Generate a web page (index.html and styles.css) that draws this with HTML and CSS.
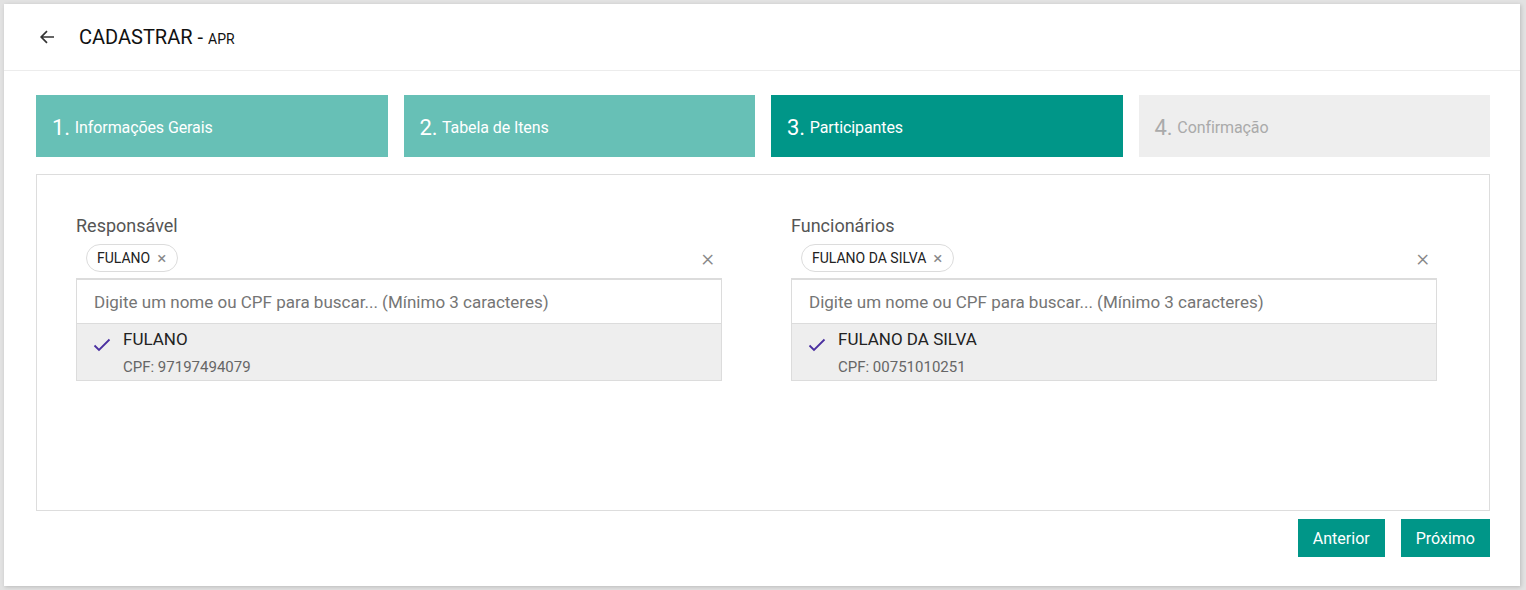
FILE: index.html
```html
<!DOCTYPE html>
<html lang="pt">
<head>
<meta charset="utf-8">
<title>Cadastrar APR</title>
<link rel="stylesheet" href="styles.css">
</head>
<body>
<div class="card">
  <header class="header">
    <svg class="back" width="16" height="16" viewBox="0 0 16 16"><path d="M15 8H2.5M8 2.2L2.2 8 8 13.8" fill="none" stroke="#333" stroke-width="1.7"/></svg>
    <h1 class="title">CADASTRAR <span class="sub">- <small>APR</small></span></h1>
  </header>
  <div class="main">
    <div class="steps">
      <div class="step done"><span class="num">1.</span> Informações Gerais</div>
      <div class="step done"><span class="num">2.</span> Tabela de Itens</div>
      <div class="step active"><span class="num">3.</span> Participantes</div>
      <div class="step todo"><span class="num">4.</span> Confirmação</div>
    </div>
    <div class="panel">
      <div class="field">
        <div class="label">Responsável</div>
        <div class="chips">
          <span class="chip">FULANO <span class="chip-x">×</span></span>
          <span class="clear">×</span>
        </div>
        <div class="dropdown">
          <div class="search">Digite um nome ou CPF para buscar... (Mínimo 3 caracteres)</div>
          <div class="option">
            <svg class="check" width="18" height="14" viewBox="0 0 18 14"><path d="M1.5 7.5L6 12 16.5 1.5" fill="none" stroke="#4a2fa0" stroke-width="1.8"/></svg>
            <div>
              <div class="opt-name">FULANO</div>
              <div class="opt-cpf">CPF: 97197494079</div>
            </div>
          </div>
        </div>
      </div>
      <div class="field">
        <div class="label">Funcionários</div>
        <div class="chips">
          <span class="chip">FULANO DA SILVA <span class="chip-x">×</span></span>
          <span class="clear">×</span>
        </div>
        <div class="dropdown">
          <div class="search">Digite um nome ou CPF para buscar... (Mínimo 3 caracteres)</div>
          <div class="option">
            <svg class="check" width="18" height="14" viewBox="0 0 18 14"><path d="M1.5 7.5L6 12 16.5 1.5" fill="none" stroke="#4a2fa0" stroke-width="1.8"/></svg>
            <div>
              <div class="opt-name">FULANO DA SILVA</div>
              <div class="opt-cpf">CPF: 00751010251</div>
            </div>
          </div>
        </div>
      </div>
    </div>
    <div class="actions">
      <button class="btn">Anterior</button>
      <button class="btn">Próximo</button>
    </div>
  </div>
</div>
</body>
</html>
```
FILE: styles.css
```css
* { box-sizing: border-box; }
html, body { margin: 0; height: 100%; }
body {
  background: #e2e2e2;
  padding: 4px 6px 4px 4px;
  font-family: Roboto, "Liberation Sans", Arial, sans-serif;
  color: #333;
}
.card {
  background: #fff;
  height: 582px;
  box-shadow: 1px 1px 4px rgba(0,0,0,0.18);
}
.header {
  height: 67px;
  border-bottom: 1px solid #ececec;
  display: flex;
  align-items: center;
  padding-left: 35px;
}
.back { display: block; margin-right: 24px; }
.title {
  margin: 0;
  font-size: 20px;
  font-weight: 400;
  color: #111;
}
.sub { font-size: 20px; }
.sub small { font-size: 14px; }
.main { padding: 24px 30px 0 32px; }
.steps {
  display: grid;
  grid-template-columns: repeat(4, 1fr);
  gap: 16px;
}
.step {
  height: 62px;
  display: flex;
  align-items: center;
  padding: 2px 16px 0;
  font-size: 16px;
  color: #fff;
  white-space: pre;
  letter-spacing: -0.1px;
}
.step .num { font-size: 22px; margin-right: 1px; }
.done { background: #67c0b6; }
.active { background: #009688; }
.todo { background: #eeeeee; color: #aaaaaa; }
.panel {
  margin-top: 17px;
  height: 337px;
  border: 1px solid #dddddd;
  display: grid;
  grid-template-columns: 646px 646px;
  column-gap: 69px;
  padding: 40px 0 0 39px;
}
.label {
  font-size: 18px;
  color: #555;
  line-height: 22px;
}
.chips {
  margin-top: 7px;
  height: 28px;
  display: flex;
  align-items: center;
  justify-content: space-between;
  padding-left: 10px;
  padding-right: 8px;
}
.chip {
  display: inline-flex;
  align-items: center;
  height: 28px;
  border: 1px solid #dcdcdc;
  border-radius: 14px;
  padding: 0 11px 0 10px;
  font-size: 14px;
  color: #222;
}
.chip-x { color: #888; font-size: 17px; margin-left: 7px; line-height: 1; }
.clear { color: #888; font-size: 24px; line-height: 1; font-weight: 300; }
.dropdown {
  margin-top: 6px;
  border: 1px solid #dcdcdc;
  border-top-width: 2px;
}
.search {
  height: 44px;
  display: flex;
  align-items: center;
  padding-left: 17px;
  font-size: 17px;
  color: #757575;
  border-bottom: 1px solid #dcdcdc;
}
.option {
  background: #eeeeee;
  height: 56px;
  display: flex;
  padding: 5px 0 0 16px;
}
.check { margin-top: 9px; margin-right: 12px; }
.opt-name { font-size: 17px; color: #222; line-height: 21px; }
.opt-cpf { font-size: 15px; color: #666; margin-top: 8px; line-height: 18px; }
.actions {
  margin-top: 8px;
  display: flex;
  justify-content: flex-end;
  gap: 16px;
}
.btn {
  height: 38px;
  border: 0;
  background: #009688;
  color: #fff;
  font-family: Roboto, "Liberation Sans", Arial, sans-serif;
  font-size: 16px;
  padding: 0 15px;
  cursor: pointer;
}
```
